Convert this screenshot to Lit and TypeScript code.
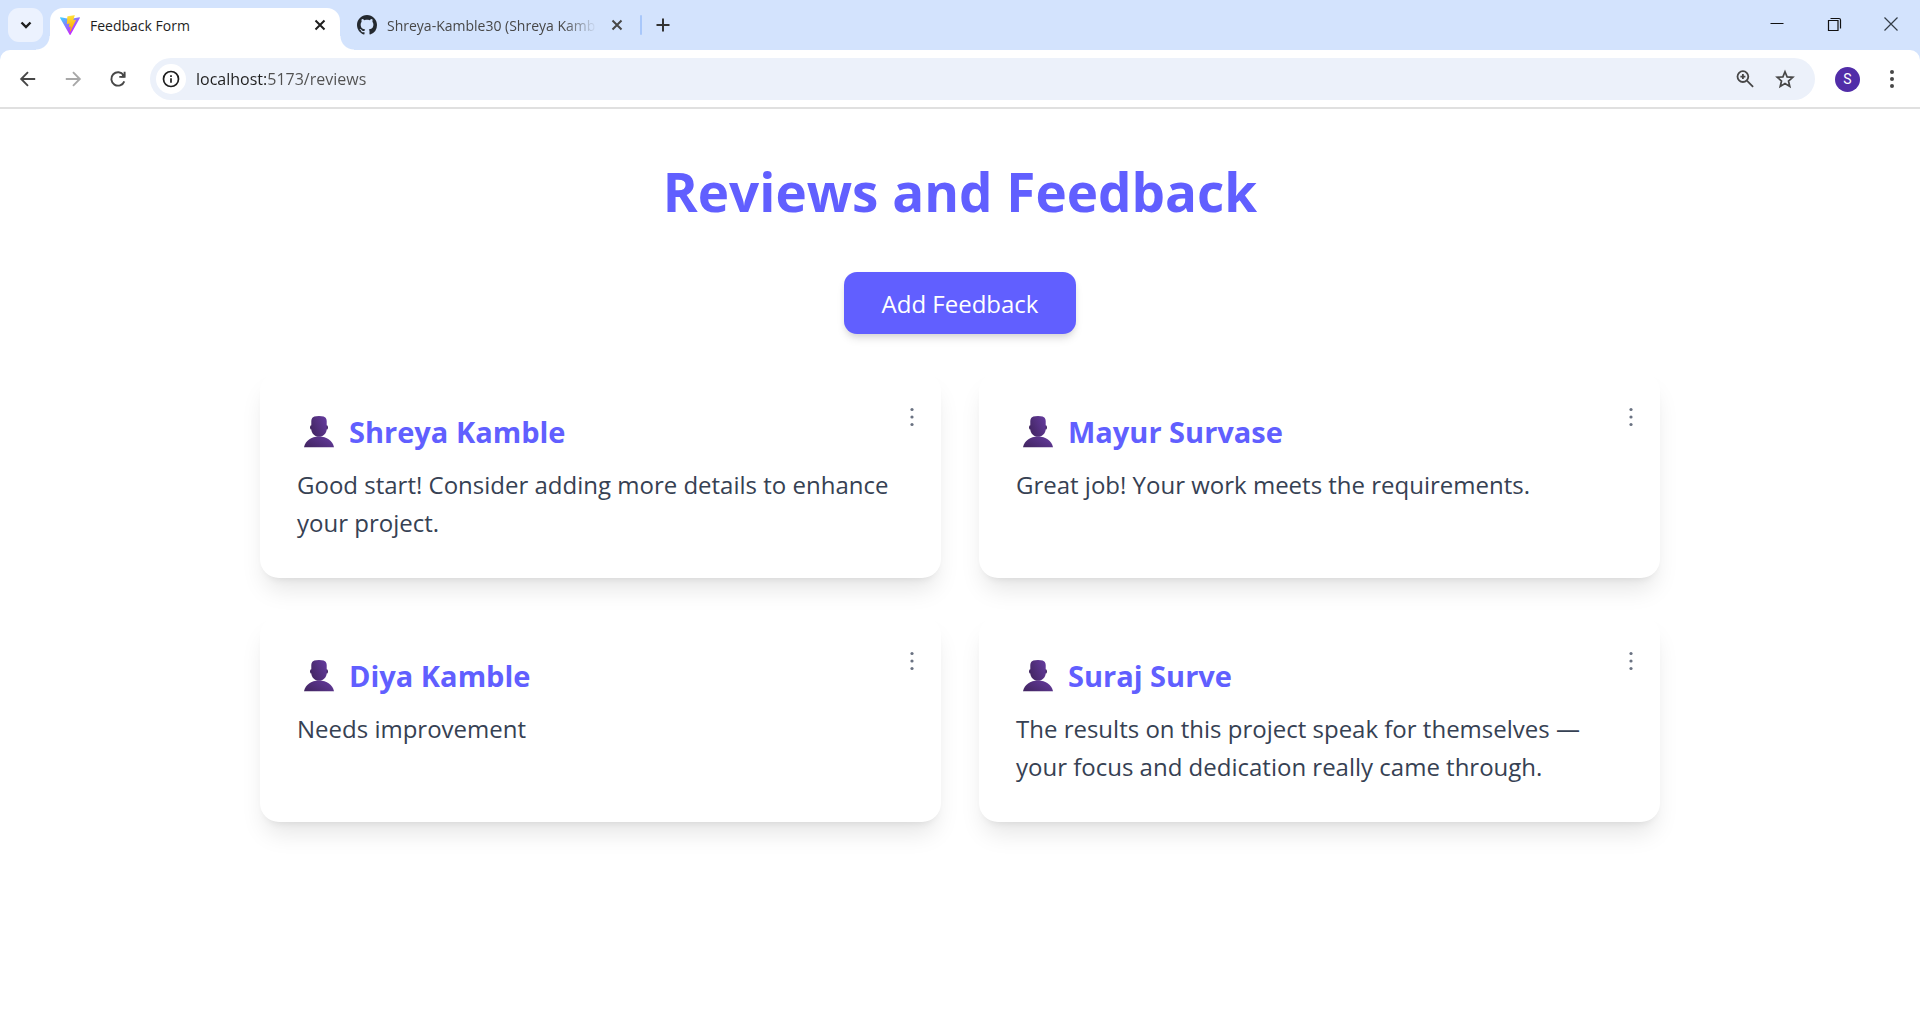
import { LitElement, html, svg, css } from "lit";
import { customElement, property } from "lit/decorators.js";

interface Review {
  name: string;
  message: string;
}

const reviews: Review[] = [
  { name: "Shreya Kamble", message: "Good start! Consider adding more details to enhance your project." },
  { name: "Mayur Survase", message: "Great job! Your work meets the requirements." },
  { name: "Diya Kamble", message: "Needs improvement" },
  {
    name: "Suraj Surve",
    message: "The results on this project speak for themselves — your focus and dedication really came through.",
  },
];

const viteLogo = html`<svg class="favicon" viewBox="0 0 256 257" aria-hidden="true">
  <defs>
    <linearGradient id="vite-body" x1="-.828%" x2="57.636%" y1="7.652%" y2="78.411%">
      <stop offset="0%" stop-color="#41D1FF" />
      <stop offset="100%" stop-color="#BD34FE" />
    </linearGradient>
    <linearGradient id="vite-bolt" x1="43.376%" x2="50.316%" y1="2.242%" y2="89.03%">
      <stop offset="0%" stop-color="#FFEA83" />
      <stop offset="8.333%" stop-color="#FFDD35" />
      <stop offset="100%" stop-color="#FFA800" />
    </linearGradient>
  </defs>
  <path fill="url(#vite-body)" d="M255.153 37.938L134.897 252.976c-2.483 4.44-8.862 4.466-11.382.048L.875 37.958c-2.746-4.814 1.371-10.646 6.827-9.67l120.385 21.517a6.537 6.537 0 0 0 2.322-.004l117.867-21.483c5.438-.991 9.574 4.796 6.877 9.62Z" />
  <path fill="url(#vite-bolt)" d="M185.432.063L96.44 17.501a3.268 3.268 0 0 0-2.634 3.014l-5.474 92.456a3.268 3.268 0 0 0 3.997 3.378l24.777-5.718c2.318-.535 4.413 1.507 3.936 3.838l-7.361 36.047c-.495 2.426 1.782 4.5 4.151 3.78l15.304-4.649c2.372-.72 4.652 1.36 4.15 3.788l-11.698 56.621c-.732 3.542 3.979 5.473 5.943 2.437l1.313-2.028l72.516-144.72c1.215-2.423-.88-5.186-3.54-4.672l-25.505 4.922c-2.396.462-4.435-1.77-3.759-4.114l16.646-57.705c.677-2.35-1.37-4.583-3.769-4.113Z" />
</svg>`;

const githubLogo = html`<svg class="favicon" viewBox="0 0 16 16" aria-hidden="true">
  <path fill="#24292f" d="M8 0C3.58 0 0 3.58 0 8c0 3.54 2.29 6.53 5.47 7.59.4.07.55-.17.55-.38 0-.19-.01-.82-.01-1.49-2.01.37-2.53-.49-2.69-.94-.09-.23-.48-.94-.82-1.13-.28-.15-.68-.52-.01-.53.63-.01 1.08.58 1.23.82.72 1.21 1.87.87 2.33.66.07-.52.28-.87.51-1.07-1.78-.2-3.64-.89-3.64-3.95 0-.87.31-1.59.82-2.15-.08-.2-.36-1.02.08-2.12 0 0 .67-.21 2.2.82.64-.18 1.32-.27 2-.27s1.36.09 2 .27c1.53-1.04 2.2-.82 2.2-.82.44 1.1.16 1.92.08 2.12.51.56.82 1.27.82 2.15 0 3.07-1.87 3.75-3.65 3.95.29.25.54.73.54 1.48 0 1.07-.01 1.93-.01 2.2 0 .21.15.46.55.38A8.01 8.01 0 0 0 16 8c0-4.42-3.58-8-8-8Z" />
</svg>`;

/** Line icons on a 20-unit grid, drawn with the current text colour. */
const icons = {
  chevron: svg`<path d="M5.500 7.500 10 12l4.500-4.500" stroke-width="2.400" />`,
  cross: svg`<path d="M5.500 5.500l9 9M14.500 5.500l-9 9" stroke-width="2" />`,
  plus: svg`<path d="M10 3.500v13M3.500 10h13" stroke-width="2" />`,
  back: svg`<path d="M17.200 10H4M10 3.200 3.200 10l6.800 6.800" stroke-width="1.900" />`,
  forward: svg`<path d="M2.800 10H16M10 3.200 16.800 10 10 16.800" stroke-width="1.900" />`,
  reload: svg`<path d="M16.300 12.300A6.700 6.700 0 1 1 15.600 6.200M16.600 2.700v5.200h-5.300" stroke-width="1.900" /><path d="M16.600 4.500v3.400H13z" fill="currentColor" />`,
  info: svg`<circle cx="10" cy="10" r="7.500" stroke-width="1.700" /><path d="M10 9.200v4.600M10 6.200v1.700" stroke-width="1.700" />`,
  zoom: svg`<circle cx="7.900" cy="7.600" r="5.400" stroke-width="1.800" /><path d="M11.900 11.700l6.200 6.100M7.900 5.100v5M5.400 7.600h5" stroke-width="1.800" />`,
  star: svg`<path d="M10 2.700l2.100 5.200 5.700.4-4.300 3.700 1.300 5.500L10 14.600 5.200 17.500l1.300-5.500L2.200 8.300l5.700-.4z" stroke-width="1.700" />`,
  minimize: svg`<path d="M3.500 9.500h13" stroke="#111" stroke-width="1" />`,
  restore: svg`<path d="M4.500 6.500h9.500v10H4.500z" stroke="#111" stroke-width="1.200" /><path d="M6.500 4.500h8.500a1.500 1.500 0 0 1 1.500 1.500v8.500" stroke="#111" stroke-width="1.200" />`,
  close: svg`<path d="M3.500 3.500l13 13M16.500 3.500l-13 13" stroke="#333c46" stroke-width="1.200" />`,
  more: svg`<g fill="currentColor" stroke="none"><circle cx="10" cy="3" r="2" /><circle cx="10" cy="10" r="2" /><circle cx="10" cy="17" r="2" /></g>`,
  dots: svg`<g fill="currentColor" stroke="none"><circle cx="10" cy="2.500" r="1.600" /><circle cx="10" cy="10" r="1.600" /><circle cx="10" cy="17.500" r="1.600" /></g>`,
};

const icon = (name: keyof typeof icons) =>
  html`<svg class="icon" viewBox="0 0 20 20" width="20" height="20" fill="none" stroke="currentColor" aria-hidden="true">${icons[name]}</svg>`;

@customElement("browser-bar")
class BrowserBar extends LitElement {
  static styles = css`
    :host {
      display: block;
      font-family: "Segoe UI", "Open Sans", "Noto Sans", sans-serif;
      background: #d3e3fd;
      color: #1f1f1f;
    }
    button {
      display: grid;
      place-items: center;
      flex: none;
      margin: 0;
      padding: 0;
      border: 0;
      background: none;
      color: inherit;
      font: inherit;
    }
    .icon {
      display: block;
    }
    .strip {
      display: flex;
      align-items: flex-end;
      height: 50px;
    }
    .search {
      width: 35px;
      height: 34px;
      margin: 0 7px 8px 8px;
      border-radius: 11px;
      background: #ecf2fe;
    }
    .tab {
      position: relative;
      display: flex;
      align-items: center;
      box-sizing: border-box;
      width: 290px;
      height: 42px;
      padding: 0 10px 8px;
      gap: 10px;
    }
    .tab.active {
      border-radius: 13px 13px 0 0;
      background: #fff;
    }
    .tab.active::before,
    .tab.active::after {
      content: "";
      position: absolute;
      bottom: 0;
      width: 14px;
      height: 14px;
    }
    .tab.active::before {
      right: 100%;
      background: radial-gradient(circle at 0 0, transparent 13px, #fff 14px);
    }
    .tab.active::after {
      left: 100%;
      background: radial-gradient(circle at 100% 0, transparent 13px, #fff 14px);
    }
    .tab.idle {
      padding: 0 3px 8px 17px;
      color: #474747;
    }
    .favicon {
      display: block;
      flex: none;
      width: 20px;
      height: 20px;
    }
    .title {
      display: block;
      flex: 1;
      min-width: 0;
      padding-top: 2px;
      overflow: hidden;
      font-size: 14px;
      line-height: 20px;
      text-align: left;
      white-space: nowrap;
    }
    .idle .title {
      -webkit-mask-image: linear-gradient(90deg, #000 calc(100% - 34px), transparent);
      mask-image: linear-gradient(90deg, #000 calc(100% - 34px), transparent);
    }
    .separator {
      width: 2px;
      height: 20px;
      margin: 0 11px 15px 10px;
      border-radius: 1px;
      background: #a8c7fa;
    }
    .new {
      padding-bottom: 15px;
      color: #333;
    }
    .window {
      display: flex;
      align-items: center;
      gap: 37px;
      margin-left: auto;
      padding: 0 19px 16px 0;
    }
    .toolbar {
      display: flex;
      align-items: center;
      box-sizing: border-box;
      height: 59px;
      padding: 8px 18px 7px;
      border-bottom: 2px solid #e0e0e0;
      border-radius: 10px 10px 0 0;
      background: #fff;
      color: #474747;
    }
    .nav {
      display: flex;
      gap: 25px;
      margin-right: 22px;
    }
    .forward {
      color: #a8a8a8;
    }
    .omnibox {
      display: flex;
      flex: 1;
      align-items: center;
      box-sizing: border-box;
      height: 42px;
      padding: 0 20px 0 6px;
      border-radius: 21px;
      background: #ecf1fa;
    }
    .site {
      width: 30px;
      height: 30px;
      margin-right: 10px;
      border-radius: 50%;
      background: #fff;
      color: #1f1f1f;
    }
    .url {
      flex: 1;
      min-width: 0;
      height: 30px;
      padding: 0;
      border: 0;
      outline: 0;
      background: linear-gradient(90deg, #1f1f1f 70px, #505050 70px);
      -webkit-background-clip: text;
      background-clip: text;
      color: #1f1f1f;
      -webkit-text-fill-color: transparent;
      font: 400 16px/30px "Segoe UI", "Open Sans", "Noto Sans", sans-serif;
    }
    .actions {
      display: flex;
      gap: 20px;
    }
    .avatar {
      width: 25px;
      height: 25px;
      margin: 0 22px 0 20px;
      border-radius: 50%;
      background: #512da8;
      color: #fff;
      font: 400 14px/25px Roboto, sans-serif;
    }
  `;

  render() {
    return html`
      <div class="strip">
        <button class="search" aria-label="Search tabs">${icon("chevron")}</button>
        <div class="tab active">
          ${viteLogo}
          <button class="title">Feedback Form</button>
          <button aria-label="Close tab">${icon("cross")}</button>
        </div>
        <div class="tab idle">
          ${githubLogo}
          <button class="title">Shreya-Kamble30 (Shreya Kamb</button>
          <button aria-label="Close tab">${icon("cross")}</button>
        </div>
        <span class="separator"></span>
        <button class="new" aria-label="New tab">${icon("plus")}</button>
        <div class="window">
          <button aria-label="Minimize">${icon("minimize")}</button>
          <button aria-label="Restore">${icon("restore")}</button>
          <button aria-label="Close">${icon("close")}</button>
        </div>
      </div>
      <div class="toolbar">
        <nav class="nav">
          <button aria-label="Back">${icon("back")}</button>
          <button class="forward" aria-label="Forward">${icon("forward")}</button>
          <button aria-label="Reload">${icon("reload")}</button>
        </nav>
        <div class="omnibox">
          <button class="site" aria-label="Site information">${icon("info")}</button>
          <input class="url" type="text" aria-label="Address" spellcheck="false" value="localhost:5173/reviews" />
          <div class="actions">
            <button aria-label="Zoom">${icon("zoom")}</button>
            <button aria-label="Bookmark">${icon("star")}</button>
          </div>
        </div>
        <button class="avatar" aria-label="Profile">S</button>
        <button aria-label="Menu">${icon("more")}</button>
      </div>
    `;
  }
}

@customElement("review-card")
class ReviewCard extends LitElement {
  @property() name = "";
  @property() message = "";

  static styles = css`
    :host {
      display: block;
    }
    .card {
      position: relative;
      box-sizing: border-box;
      height: 100%;
      padding: 38px 37px 36px;
      border-radius: 19px;
      background: #fff;
      box-shadow: 0 16px 24px -5px rgba(0, 0, 0, 0.1), 0 6px 9px -6px rgba(0, 0, 0, 0.1);
    }
    .name {
      display: flex;
      align-items: center;
      gap: 8px;
      margin: 0 0 12px;
      color: #615fff;
      font-size: 29px;
      font-weight: 700;
      line-height: 44px;
    }
    .person {
      flex: none;
      width: 44px;
      height: 44px;
    }
    .message {
      margin: 0;
      color: #364153;
      font-size: 24px;
      line-height: 38px;
    }
    .options {
      position: absolute;
      top: 34px;
      right: 18px;
      display: grid;
      place-items: center;
      width: 22px;
      height: 22px;
      padding: 0;
      border: 0;
      background: none;
      color: #6a7282;
    }
  `;

  render() {
    return html`
      <article class="card">
        <button class="options" aria-label="Options">
          <svg viewBox="0 0 20 20" width="20" height="20" fill="none" aria-hidden="true">${icons.dots}</svg>
        </button>
        <h2 class="name">
          <svg class="person" viewBox="0 0 44 44" aria-hidden="true">
            <defs>
              <linearGradient id="skin" x1="0" x2="1" y1="0.800" y2="0.200">
                <stop offset="0" stop-color="#432663" />
                <stop offset="1" stop-color="#633a9b" />
              </linearGradient>
            </defs>
            <ellipse fill="#3f245f" cx="14.400" cy="17.400" rx="1.400" ry="2.200" />
            <ellipse fill="#3f245f" cx="29.600" cy="17.400" rx="1.400" ry="2.200" />
            <path fill="url(#skin)" d="M14.300 11c0-1 .3-2 .9-2.900.8-1.400 2.800-2.100 6.800-2.100s6 .7 6.800 2.100c.6.900.9 1.900.9 2.900v8c0 4.500-3.700 7.800-7.700 7.800S14.300 23.500 14.300 19z" />
            <path fill="url(#skin)" d="M7 37.200C8.500 31 14 26.600 22 26.600S35.500 31 37 37.200z" />
          </svg>
          ${this.name}
        </h2>
        <p class="message">${this.message}</p>
      </article>
    `;
  }
}

@customElement("app-root")
class AppRoot extends LitElement {
  static styles = css`
    :host {
      display: block;
      min-height: 100vh;
      background: #fff;
      font-family: "Segoe UI", "Open Sans", "Noto Sans", sans-serif;
    }
    .page {
      display: flex;
      flex-direction: column;
      align-items: center;
      padding: 51px 38px;
    }
    .heading {
      margin: 0 0 48px;
      color: #615fff;
      font-size: 53px;
      font-weight: 700;
      line-height: 64px;
      text-align: center;
    }
    .add {
      margin: 0 0 38px;
      padding: 13px 38px 11px;
      border: 0;
      border-radius: 13px;
      background: #615fff;
      box-shadow: 0 6px 9px -1px rgba(0, 0, 0, 0.1), 0 3px 6px -2px rgba(0, 0, 0, 0.1);
      color: #fff;
      font-family: inherit;
      font-size: 24px;
      line-height: 38px;
    }
    .grid {
      display: grid;
      grid-template-columns: 1fr 1fr;
      gap: 38px;
      width: 100%;
      max-width: 1400px;
    }
  `;

  render() {
    return html`
      <browser-bar></browser-bar>
      <main class="page">
        <h1 class="heading">Reviews and Feedback</h1>
        <button class="add">Add Feedback</button>
        <section class="grid">
          ${reviews.map((r) => html`<review-card .name=${r.name} .message=${r.message}></review-card>`)}
        </section>
      </main>
    `;
  }
}
